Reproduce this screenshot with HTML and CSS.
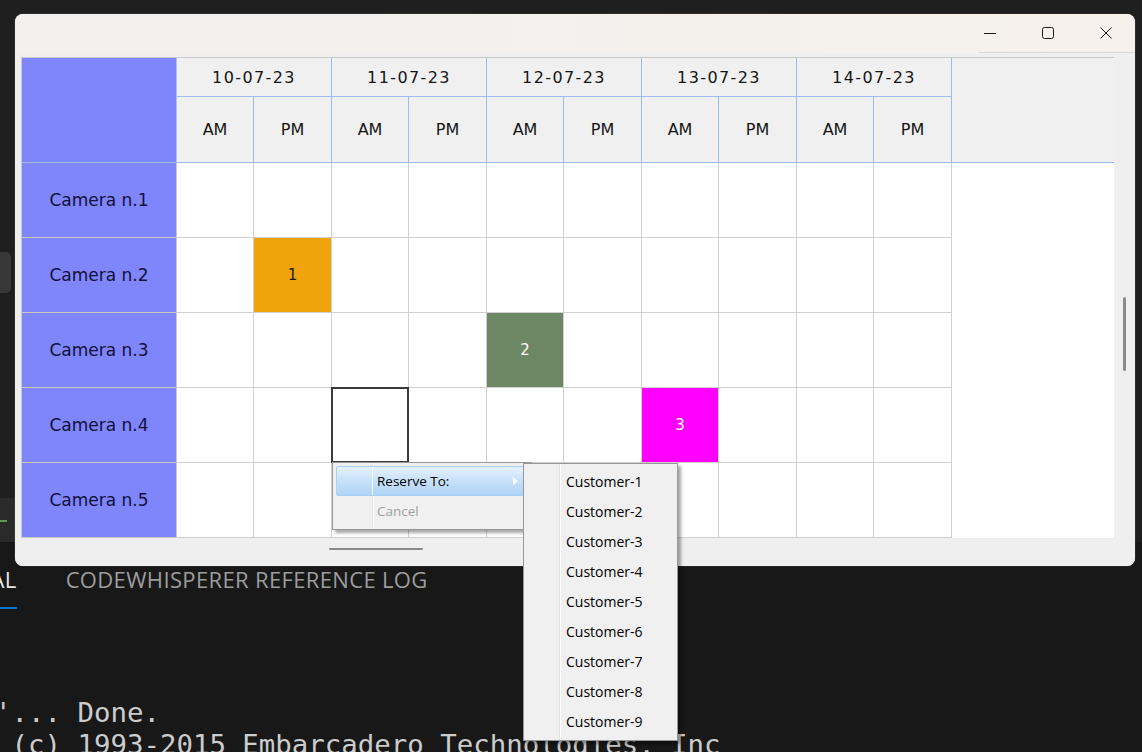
FILE: index.html
```html
<!DOCTYPE html>
<html>
<head>
<meta charset="utf-8">
<link rel="stylesheet" href="styles.css">
</head>
<body>
<div class="desk">
  <div class="editor">
    <div class="gutter">
      <div class="gbox"></div>
      <div class="gpatch"><div class="gline"></div></div>
    </div>
  </div>
  <div class="panel">
    <div class="tabs">
      <div class="tab active">TERMINAL</div>
      <div class="tab">CODEWHISPERER REFERENCE LOG</div>
    </div>
    <div class="term"><div>'... Done.</div><div> (c) 1993-2015 Embarcadero Technologies, Inc</div></div>
  </div>
</div>

<div class="window">
  <div class="titlebar">
    <div class="caption">
      <div class="cbtn"><svg width="12" height="12" viewBox="0 0 12 12"><path d="M0 6.5H12" stroke="#1a1a1a" stroke-width="1"/></svg></div>
      <div class="cbtn"><svg width="12" height="12" viewBox="0 0 12 12"><rect x="0.5" y="0.5" width="11" height="11" rx="2" fill="none" stroke="#1a1a1a" stroke-width="1"/></svg></div>
      <div class="cbtn"><svg width="12" height="12" viewBox="0 0 12 12"><path d="M0.5 0.5L11.5 11.5M11.5 0.5L0.5 11.5" stroke="#1a1a1a" stroke-width="1"/></svg></div>
    </div>
  </div>
  <div class="client">
    <div class="grid">
      <div class="c corner"></div>
      <div class="c day">10-07-23</div>
      <div class="c day">11-07-23</div>
      <div class="c day">12-07-23</div>
      <div class="c day">13-07-23</div>
      <div class="c day">14-07-23</div>
      <div class="c hfill"></div>
      <div class="c half">AM</div><div class="c half">PM</div>
      <div class="c half">AM</div><div class="c half">PM</div>
      <div class="c half">AM</div><div class="c half">PM</div>
      <div class="c half">AM</div><div class="c half">PM</div>
      <div class="c half">AM</div><div class="c half">PM</div>
      <div class="c dfill"></div>

      <div class="c cam">Camera n.1</div>
      <div class="c cell"></div><div class="c cell"></div><div class="c cell"></div><div class="c cell"></div><div class="c cell"></div>
      <div class="c cell"></div><div class="c cell"></div><div class="c cell"></div><div class="c cell"></div><div class="c cell"></div>

      <div class="c cam">Camera n.2</div>
      <div class="c cell"></div><div class="c cell orange">1</div><div class="c cell"></div><div class="c cell"></div><div class="c cell"></div>
      <div class="c cell"></div><div class="c cell"></div><div class="c cell"></div><div class="c cell"></div><div class="c cell"></div>

      <div class="c cam">Camera n.3</div>
      <div class="c cell"></div><div class="c cell"></div><div class="c cell"></div><div class="c cell"></div><div class="c cell green">2</div>
      <div class="c cell"></div><div class="c cell"></div><div class="c cell"></div><div class="c cell"></div><div class="c cell"></div>

      <div class="c cam">Camera n.4</div>
      <div class="c cell"></div><div class="c cell"></div><div class="c cell sel"></div><div class="c cell"></div><div class="c cell"></div>
      <div class="c cell"></div><div class="c cell magenta">3</div><div class="c cell"></div><div class="c cell"></div><div class="c cell"></div>

      <div class="c cam">Camera n.5</div>
      <div class="c cell"></div><div class="c cell"></div><div class="c cell"></div><div class="c cell"></div><div class="c cell"></div>
      <div class="c cell"></div><div class="c cell"></div><div class="c cell"></div><div class="c cell"></div><div class="c cell"></div>
    </div>
    <div class="vscroll"><div class="vthumb"></div></div>
    <div class="hscroll"><div class="hthumb"></div></div>
  </div>
</div>

<div class="menu main">
  <div class="mi hot"><span>Reserve To:</span><span class="arrow"></span></div>
  <div class="mi dis">Cancel</div>
</div>
<div class="menu sub">
  <div class="mi">Customer-1</div>
  <div class="mi">Customer-2</div>
  <div class="mi">Customer-3</div>
  <div class="mi">Customer-4</div>
  <div class="mi">Customer-5</div>
  <div class="mi">Customer-6</div>
  <div class="mi">Customer-7</div>
  <div class="mi">Customer-8</div>
  <div class="mi">Customer-9</div>
</div>
</body>
</html>
```

FILE: styles.css
```css
* { box-sizing: border-box; }
html, body { margin: 0; padding: 0; }
body {
  width: 1142px;
  height: 752px;
  overflow: hidden;
  position: relative;
  background: #1f1f1f;
  font-family: "DejaVu Sans", Verdana, sans-serif;
}

/* background editor */
.desk { display: flex; flex-direction: column; height: 752px; }
.editor { height: 542px; flex: none; }
.gutter { width: 15px; display: flex; flex-direction: column; }
.gbox { margin-top: 252px; width: 11px; height: 41px; background: #383838; border-radius: 0 5px 5px 0; }
.gpatch { margin-top: 205px; height: 44px; background: #2a2a2a; padding-top: 22px; }
.gline { width: 7px; height: 2px; background: #5f9a4f; }
.panel { flex: 1; background: #181818; overflow: hidden; }
.tabs { display: flex; align-items: flex-start; height: 67px; }
.tab {
  font-family: "Open Sans", sans-serif;
  font-size: 22px;
  letter-spacing: 0.35px;
  line-height: 26px;
  padding-top: 24px;
  padding-bottom: 15px;
  color: #9d9d9d;
  border-bottom: 2px solid transparent;
  white-space: nowrap;
}
.tab.active { color: #e7e7e7; border-bottom-color: #0078d4; margin-left: -92px; margin-right: 49px; }
.term {
  margin-top: 88px;
  margin-left: -5px;
  font-family: "DejaVu Sans Mono", monospace;
  font-size: 27.4px;
  line-height: 32px;
  color: #cccccc;
  white-space: pre;
}

/* window */
.window {
  position: absolute;
  left: 15px;
  top: 14px;
  width: 1120px;
  height: 552px;
  border-radius: 8px;
  overflow: hidden;
  background: #f0f0f0;
  display: flex;
  flex-direction: column;
  box-shadow: 0 0 0 1px rgba(255,255,255,0.06);
}
.titlebar {
  height: 39px;
  flex: none;
  background: linear-gradient(90deg, #f2f1f0, #f4f1ed 60%, #f6f1ea);
  display: flex;
  justify-content: flex-end;
}
.caption { display: flex; height: 39px; position: relative; }
.caption::after {
  content: "";
  position: absolute;
  left: 18px; right: 0; bottom: 0;
  height: 1px;
  background: #d9d8d6;
}
.cbtn { width: 58px; height: 38px; display: flex; align-items: center; justify-content: center; }
.cbtn svg { display: block; }

.client {
  flex: 1;
  display: grid;
  grid-template-columns: 1093px 21px;
  grid-template-rows: 481px 28px;
  padding: 4px 0 0 6px;
  background: #efefef;
}
.grid {
  display: grid;
  grid-template-columns: 155px repeat(5, 77px 78px) 162px;
  grid-template-rows: 39px 66px repeat(5, 75px);
  border-top: 1px solid #c9c9c9;
  border-left: 1px solid #c9c9c9;
  background: #fff;
}
.c {
  display: flex;
  align-items: center;
  justify-content: center;
  font-size: 16px;
  color: #151515;
}
.corner { grid-row: 1 / 3; background: #7f85fa; border-right: 1px solid #b3bfec; border-bottom: 1px solid #9cbcef; }
.day { grid-column: span 2; background: #f0f0f0; border-right: 1px solid #9cbcef; border-bottom: 1px solid #9cbcef; letter-spacing: 1.4px; }
.hfill { grid-row: 1 / 3; grid-column: 12; background: #f0f0f0; border-bottom: 1px solid #9cbcef; }
.half { background: #f0f0f0; border-right: 1px solid #9cbcef; border-bottom: 1px solid #9cbcef; }
.dfill { grid-row: 3 / 8; grid-column: 12; background: #fff; }
.cam { background: #7f85fa; border-right: 1px solid #c8c8c8; border-bottom: 1px solid #c8c8c8; font-size: 17px; color: #10103a; }
.cell { background: #fff; border-right: 1px solid #d0d0d0; border-bottom: 1px solid #d0d0d0; font-size: 15px; }
.orange { background: #f0a30a; color: #1c1c1c; }
.green { background: #6d8764; color: #fff; }
.magenta { background: #ff00ff; color: #fff; }
.sel { position: relative; }
.sel::after {
  content: "";
  position: absolute;
  left: -1px; top: -1px; right: -1px; bottom: -1px;
  border: 2px solid #3a3a3a;
}

.vscroll { display: flex; flex-direction: column; }
.vthumb { margin: 240px 0 0 9px; width: 3px; height: 74px; background: #8a8a8a; border-radius: 2px; }
.hscroll { display: flex; }
.hthumb { margin: 10px 0 0 308px; width: 94px; height: 2px; background: #8a8a8a; border-radius: 1px; }

/* popup menus */
.menu {
  position: absolute;
  border: 1px solid #979797;
  padding: 3px;
  box-shadow: 3px 3px 3px rgba(0,0,0,0.35);
  font-family: "Open Sans", sans-serif;
  font-size: 13.5px;
  color: #000;
}
.main {
  left: 332px;
  top: 462px;
  width: 200px;
  background: linear-gradient(90deg, transparent 39px, #e2e3e3 39px, #e2e3e3 40px, #ffffff 40px, #ffffff 41px, transparent 41px), #f0f0f0;
}
.sub {
  left: 523px;
  top: 463px;
  width: 155px;
  font-size: 14px;
  background: linear-gradient(90deg, transparent 35px, #e2e3e3 35px, #e2e3e3 36px, #ffffff 36px, #ffffff 37px, transparent 37px), #f0f0f0;
}
.mi { height: 30px; display: flex; align-items: center; padding-left: 41px; padding-bottom: 1px; white-space: nowrap; }
.sub .mi { padding-left: 39px; padding-bottom: 2px; }
.mi.hot {
  position: relative;
  padding-left: 40px;
  border: 1px solid #a9cff5;
  border-radius: 2px;
  background: linear-gradient(#e6f1fd, #c7e1fa 50%, #aed3f6);
}
.mi.hot::before {
  content: "";
  position: absolute;
  left: 35px; top: 0; bottom: 0;
  width: 1px;
  background: rgba(255,255,255,0.85);
}
.arrow {
  margin-left: auto;
  margin-right: 9px;
  width: 0; height: 0;
  border-left: 5px solid #ffffff;
  border-top: 4px solid transparent;
  border-bottom: 4px solid transparent;
}
.dis { color: #a0a0a0; }
```
